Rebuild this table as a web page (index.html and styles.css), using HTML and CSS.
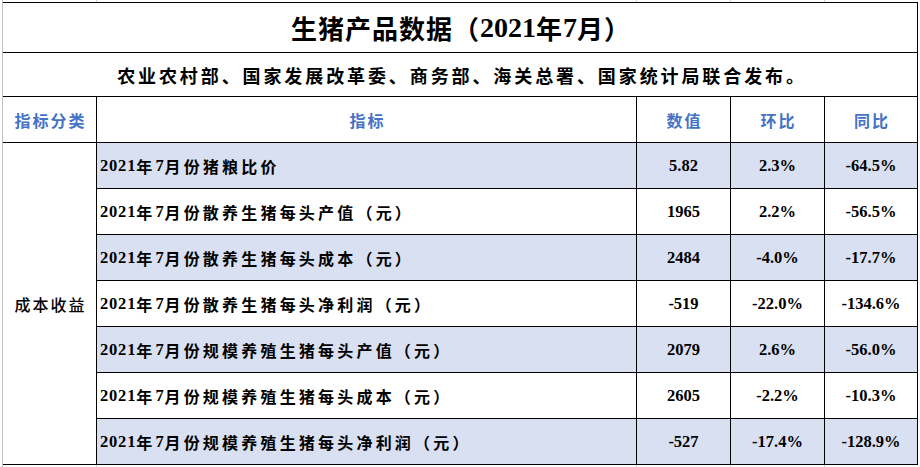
FILE: index.html
```html
<!DOCTYPE html>
<html lang="zh-CN">
<head>
<meta charset="utf-8">
<title>生猪产品数据（2021年7月）</title>
<link rel="stylesheet" href="styles.css">
</head>
<body>
<div class="sheet">
  <div class="grid">
    <div class="cell title span-all">生猪产品数据（<span class="tnum">2021</span>年<span class="tnum">7</span>月）</div>
    <div class="cell subtitle span-all">农业农村部、国家发展改革委、商务部、海关总署、国家统计局联合发布。</div>

    <div class="cell head">指标分类</div>
    <div class="cell head">指标</div>
    <div class="cell head">数值</div>
    <div class="cell head">环比</div>
    <div class="cell head">同比</div>

    <div class="cell category">成本收益</div>

    <div class="cell name band"><span class="num">2021</span>年<span class="num">7</span>月份猪粮比价</div>
    <div class="cell val band">5.82</div>
    <div class="cell val band">2.3%</div>
    <div class="cell val band">-64.5%</div>

    <div class="cell name"><span class="num">2021</span>年<span class="num">7</span>月份散养生猪每头产值（元）</div>
    <div class="cell val">1965</div>
    <div class="cell val">2.2%</div>
    <div class="cell val">-56.5%</div>

    <div class="cell name band"><span class="num">2021</span>年<span class="num">7</span>月份散养生猪每头成本（元）</div>
    <div class="cell val band">2484</div>
    <div class="cell val band">-4.0%</div>
    <div class="cell val band">-17.7%</div>

    <div class="cell name"><span class="num">2021</span>年<span class="num">7</span>月份散养生猪每头净利润（元）</div>
    <div class="cell val">-519</div>
    <div class="cell val">-22.0%</div>
    <div class="cell val">-134.6%</div>

    <div class="cell name band"><span class="num">2021</span>年<span class="num">7</span>月份规模养殖生猪每头产值（元）</div>
    <div class="cell val band">2079</div>
    <div class="cell val band">2.6%</div>
    <div class="cell val band">-56.0%</div>

    <div class="cell name"><span class="num">2021</span>年<span class="num">7</span>月份规模养殖生猪每头成本（元）</div>
    <div class="cell val">2605</div>
    <div class="cell val">-2.2%</div>
    <div class="cell val">-10.3%</div>

    <div class="cell name band"><span class="num">2021</span>年<span class="num">7</span>月份规模养殖生猪每头净利润（元）</div>
    <div class="cell val band">-527</div>
    <div class="cell val band">-17.4%</div>
    <div class="cell val band">-128.9%</div>
  </div>
</div>
</body>
</html>
```

FILE: styles.css
```css
html, body {
  margin: 0;
  padding: 0;
  background: #ffffff;
}

.sheet {
  margin-left: 2px;
  border-left: 1px solid #c4c4c4;
  height: 467px;
  padding-top: 2px;
  box-sizing: border-box;
  background:
    linear-gradient(#d4d4d4, #d4d4d4) 93px 0 / 1px 467px no-repeat,
    linear-gradient(#d4d4d4, #d4d4d4) 633px 0 / 1px 467px no-repeat,
    linear-gradient(#d4d4d4, #d4d4d4) 727px 0 / 1px 467px no-repeat,
    linear-gradient(#d4d4d4, #d4d4d4) 821px 0 / 1px 467px no-repeat;
}

.grid {
  display: grid;
  width: 915px;
  box-sizing: border-box;
  grid-template-columns: 93px 539px 93px 93px 92px;
  grid-template-rows: 49px 43px 45px repeat(7, 45px);
  gap: 1px;
  padding: 1px 1px 1px 0;
  background: #000000;
}

.cell {
  background: #ffffff;
  display: flex;
  align-items: center;
  justify-content: center;
  color: #000000;
  white-space: nowrap;
  overflow: hidden;
}

.span-all {
  grid-column: 1 / -1;
}

.title {
  font-family: "Liberation Serif", "Noto Sans CJK SC", serif;
  font-weight: 700;
  font-size: 26px;
  letter-spacing: 1px;
  padding-left: 2px;
}

.title .tnum {
  font-size: 28px;
  letter-spacing: 0;
}

.subtitle {
  font-family: "Noto Sans CJK SC", "Noto Sans", sans-serif;
  font-weight: 700;
  font-size: 18px;
  letter-spacing: 2.9px;
  padding-left: 4px;
}

.head {
  font-family: "Noto Sans CJK SC", "Noto Sans", sans-serif;
  font-weight: 700;
  font-size: 16px;
  letter-spacing: 2px;
  color: #4472c4;
  padding-left: 2px;
}

.category {
  grid-column: 1;
  grid-row: 4 / span 7;
  font-family: "Noto Sans CJK SC", "Noto Sans", sans-serif;
  font-weight: 500;
  font-size: 16px;
  letter-spacing: 2px;
  padding-left: 2px;
}

.name {
  justify-content: flex-start;
  padding-left: 3px;
  font-family: "Liberation Serif", "Noto Sans CJK SC", serif;
  font-weight: 700;
  font-size: 16px;
  letter-spacing: 3.2px;
}

.name .num {
  font-size: 16.5px;
  letter-spacing: 0.8px;
}

.val {
  font-family: "Liberation Serif", serif;
  font-weight: 700;
  font-size: 16.5px;
}

.band {
  background: #d9e0f2;
}
```
